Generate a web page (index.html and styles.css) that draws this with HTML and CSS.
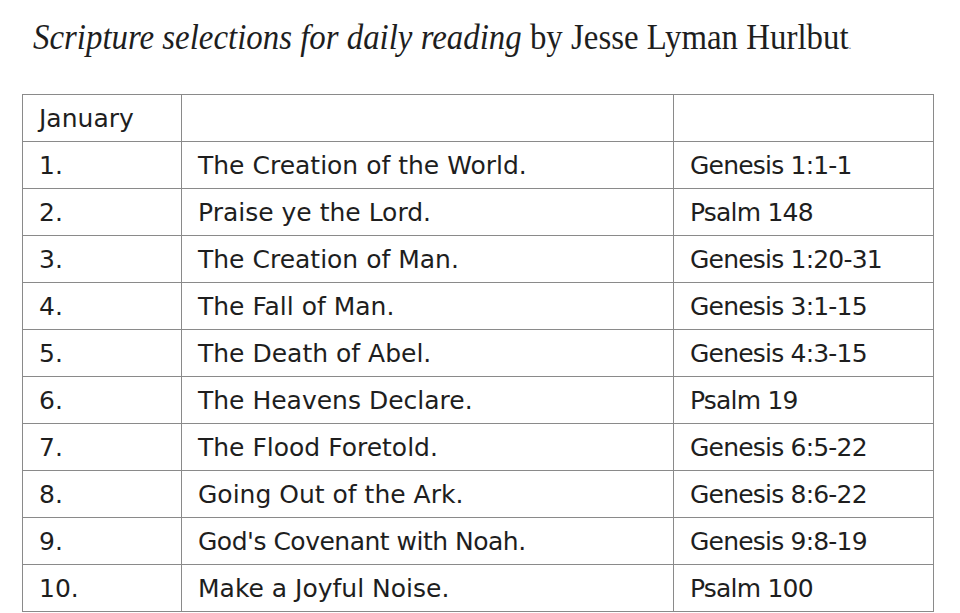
FILE: index.html
```html
<!DOCTYPE html>
<html>
<head>
<meta charset="utf-8">
<link rel="stylesheet" href="styles.css">
</head>
<body>
<h1 class="title"><span class="title-text"><em>Scripture selections for daily reading</em> by Jesse Lyman Hurlbut<span class="dot">.</span></span></h1>
<table class="readings">
  <colgroup><col class="c1"><col class="c2"><col class="c3"></colgroup>
  <tr><td>January</td><td></td><td></td></tr>
  <tr><td>1.</td><td>The Creation of the World.</td><td class="ref">Genesis 1:1-1</td></tr>
  <tr><td>2.</td><td>Praise ye the Lord.</td><td class="ref">Psalm 148</td></tr>
  <tr><td>3.</td><td>The Creation of Man.</td><td class="ref">Genesis 1:20-31</td></tr>
  <tr><td>4.</td><td>The Fall of Man.</td><td class="ref">Genesis 3:1-15</td></tr>
  <tr><td>5.</td><td>The Death of Abel.</td><td class="ref">Genesis 4:3-15</td></tr>
  <tr><td>6.</td><td>The Heavens Declare.</td><td class="ref">Psalm 19</td></tr>
  <tr><td>7.</td><td>The Flood Foretold.</td><td class="ref">Genesis 6:5-22</td></tr>
  <tr><td>8.</td><td>Going Out of the Ark.</td><td class="ref">Genesis 8:6-22</td></tr>
  <tr><td>9.</td><td class="tight">God's Covenant with Noah.</td><td class="ref">Genesis 9:8-19</td></tr>
  <tr><td>10.</td><td>Make a Joyful Noise.</td><td class="ref">Psalm 100</td></tr>
</table>
</body>
</html>
```
FILE: styles.css
```css
html, body { margin: 0; padding: 0; background: #fff; }
body { padding: 0 0 0 22px; overflow: hidden; height: 613px; box-sizing: border-box; }
.title {
  margin: 0;
  padding: 16px 0 0 11px;
  height: 94px;
  box-sizing: border-box;
  font-family: "Liberation Serif", serif;
  font-weight: normal;
  font-size: 36px;
  line-height: 42px;
  color: #1e1e1e;
  white-space: nowrap;
}
.title-text {
  display: inline-block;
  transform: scaleX(0.913);
  transform-origin: left center;
}
.title em { font-style: italic; }
.title .dot { font-size: 13px; color: #888; }
.readings {
  border-collapse: collapse;
  table-layout: fixed;
  width: 911px;
  font-family: "DejaVu Sans", sans-serif;
  font-size: 25px;
  color: #1e1e1e;
}
.c1 { width: 159px; }
.c2 { width: 492px; }
.c3 { width: 260px; }
.readings td {
  border: 1px solid #8a8a8a;
  height: 47px;
  padding: 0 0 0 16px;
  box-sizing: border-box;
  vertical-align: middle;
  white-space: nowrap;
}
.readings td.ref { letter-spacing: -0.8px; }
.readings td.tight { letter-spacing: -0.5px; }
```
